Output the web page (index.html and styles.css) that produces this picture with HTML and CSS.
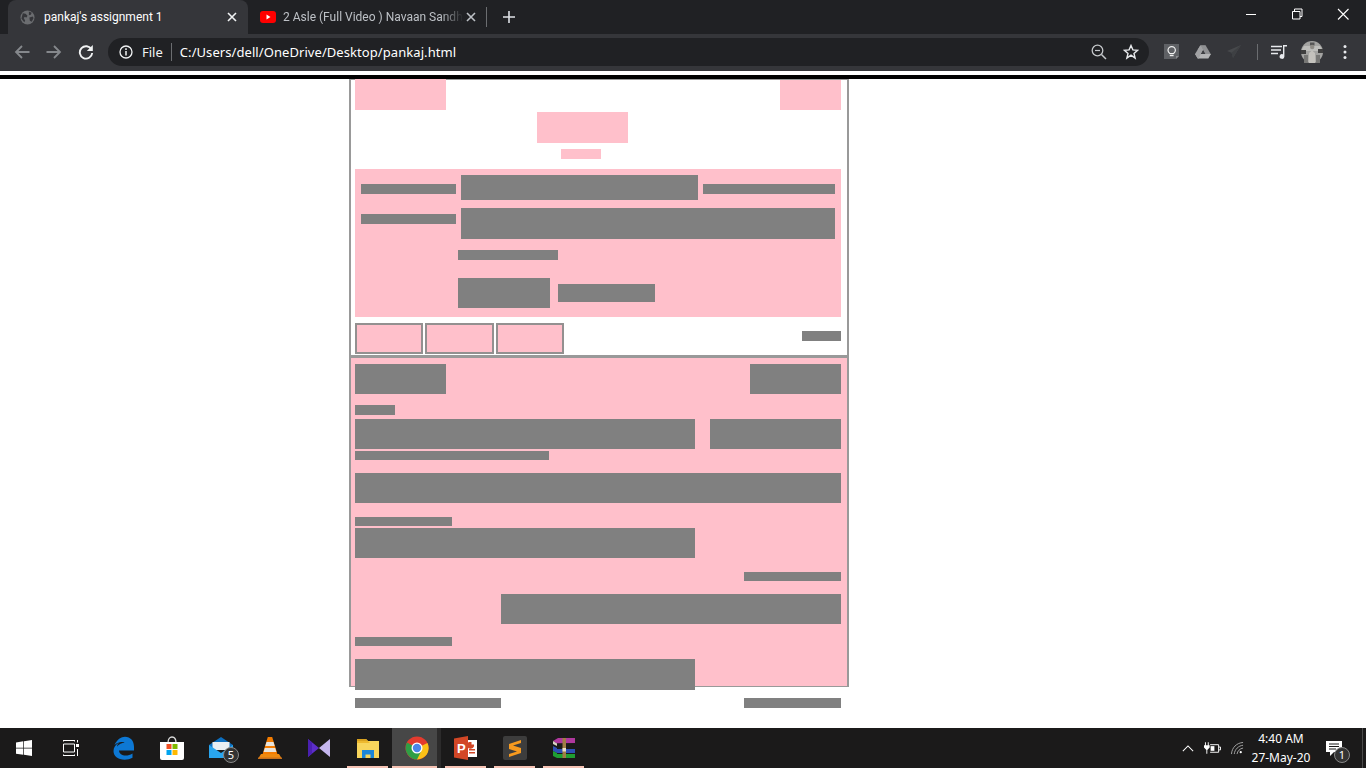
FILE: index.html
```html
<!DOCTYPE html>
<html lang="en">
<head>
    <meta charset="UTF-8">
    <meta name="viewport" content="width=device-width, initial-scale=1.0">
    <title>pankaj's assignment 1</title>
    <link rel="stylesheet" href="styles.css">
</head>
<body>
    <div class="window">
        <!-- tabs -->
        <div class="tabstrip">
            <div class="tab active">
                <svg class="favicon globe" viewBox="0 0 16 16"><circle cx="8" cy="8" r="7.500" fill="#6b6d70"/><path d="M3 3.500l3 .5 2 2-1 2-2-.5-1 1 1.500 3-1 1.500-3-4zM9.500 1.500l3 1.500-1 2-2 .500zM10 8l3.500-1 1 1.500-2 4-2-1z" fill="#35363a"/></svg>
                <span class="tab-title">pankaj's assignment 1</span>
                <svg class="tab-close" viewBox="0 0 10 10"><path d="M1 1l8 8M9 1l-8 8" stroke="#f1f3f4" stroke-width="1.600"/></svg>
            </div>
            <div class="tab">
                <svg class="favicon" viewBox="0 0 16 16"><rect y="2" width="16" height="12" rx="3" fill="#f00"/><path d="M6.500 5.500l4 2.500-4 2.500z" fill="#fff"/></svg>
                <span class="tab-title faded">2 Asle (Full Video ) Navaan Sandh</span>
                <svg class="tab-close" viewBox="0 0 10 10"><path d="M1 1l8 8M9 1l-8 8" stroke="#bdc1c6" stroke-width="1.600"/></svg>
            </div>
            <div class="tab-sep"></div>
            <svg class="new-tab" viewBox="0 0 12 12"><path d="M6 0v12M0 6h12" stroke="#dee1e6" stroke-width="1.600"/></svg>
            <div class="win-controls">
                <svg class="win-btn" viewBox="0 0 46 12"><path d="M18 6.500h10" stroke="#fff"/></svg>
                <svg class="win-btn" viewBox="0 0 46 12"><path d="M18.500 3.500h7.500v7.500h-7.500zM20.500 3.500v-2.500h7.500v7.500h-2" fill="none" stroke="#fff"/></svg>
                <svg class="win-btn" viewBox="0 0 46 12"><path d="M18 1l10.500 10.500M28.500 1l-10.500 10.500" stroke="#fff" stroke-width="1.100"/></svg>
            </div>
        </div>

        <!-- address bar -->
        <div class="toolbar">
            <svg class="nav-icon" viewBox="0 0 16 16"><path d="M15.500 8H2M8 2L2 8l6 6" fill="none" stroke="#85888c" stroke-width="1.800"/></svg>
            <svg class="nav-icon" viewBox="0 0 16 16"><path d="M.5 8H14M8 2l6 6-6 6" fill="none" stroke="#85888c" stroke-width="1.800"/></svg>
            <svg class="nav-icon" viewBox="0 0 16 16"><path d="M13.500 5.500A6.200 6.200 0 1 0 14.200 9" fill="none" stroke="#f1f3f4" stroke-width="1.900"/><path d="M14.800 1v6h-6z" fill="#f1f3f4"/></svg>
            <div class="omnibox">
                <svg class="info-icon" viewBox="0 0 14 14"><circle cx="7" cy="7" r="6" fill="none" stroke="#f1f3f4" stroke-width="1.300"/><path d="M7 6v4.500M7 3.300v1.600" stroke="#f1f3f4" stroke-width="1.500"/></svg>
                <span class="scheme">File</span>
                <span class="url">C:/Users/dell/OneDrive/Desktop/pankaj.html</span>
                <svg class="box-icon zoom-icon" viewBox="0 0 16 16"><circle cx="6.500" cy="6.500" r="5.300" fill="none" stroke="#c4c7ca" stroke-width="1.300"/><path d="M10.500 10.500l4.500 4.500" stroke="#c4c7ca" stroke-width="1.500"/><path d="M4 6.500h5" stroke="#c4c7ca" stroke-width="1.200"/></svg>
                <svg class="box-icon star-icon" viewBox="0 0 16 16"><path d="M8 1.500l1.900 4.400 4.700.4-3.600 3.100 1.100 4.700L8 11.200l-4.100 2.900 1.100-4.700L1.400 6.300l4.700-.4z" fill="none" stroke="#e8eaed" stroke-width="1.400"/></svg>
            </div>
            <svg class="ext ext-keep" viewBox="0 0 16 16"><path d="M0 0h15v12l-3 3H0z" fill="#5f6165"/><path d="M12 15v-3h3z" fill="#8a8b8e"/><path d="M5.800 9.500C4.500 8.600 4 7.500 4 6.300a3.700 3.700 0 0 1 7.400 0c0 1.200-.5 2.300-1.800 3.200z" fill="none" stroke="#f1f1f1" stroke-width="1.200"/><path d="M5.800 10.700h3.800v1.500H5.800z" fill="#f1f1f1"/></svg>
            <svg class="ext ext-drive" viewBox="0 0 16 16"><path d="M5.300 1.500h5.400L5.300 10.800 2.600 6z" fill="#a9aaac"/><path d="M10.700 1.500L16 10.500h-5.400L5.300 1.500z" fill="#8f9092"/><path d="M5.300 10.500H16l-2.700 4.500H2.700L0 10.500z" fill="#b4b5b6" transform="translate(0 -.5)"/><path d="M0 10l5.300-8.500L8 6l-4.700 9z" fill="#a0a1a3"/><path d="M8 6.300l2 3.700H6z" fill="#3f4043"/></svg>
            <svg class="ext ext-send" viewBox="0 0 16 16"><path d="M15 1L1 7l4.500 1.800L7 14z" fill="#47494c"/><path d="M15 1L5.500 8.800 7 14l1.500-3z" fill="#3e4043"/></svg>
            <div class="toolbar-sep"></div>
            <svg class="ext ext-music" viewBox="0 0 16 16"><path d="M0 2.500h11M0 6h10M0 9.500h7" stroke="#e8eaed" stroke-width="1.300"/><path d="M12 1h4v1.500h-2.600V12.500a2.400 2.400 0 1 1-1.400-2.200z" fill="#e8eaed"/></svg>
            <svg class="avatar" viewBox="0 0 22 22">
                <circle cx="11" cy="11" r="11" fill="#a3a3a1"/>
                <path d="M3 5h16l3 5H0z" fill="#bdbdba"/>
                <path d="M0 9h5v4H0zM17 8h5v4h-5z" fill="#3f3f3f"/>
                <path d="M3 14h4v8H3zM15 14h4v8h-4z" fill="#777775"/>
                <path d="M9 1.500h4.500v3H9z" fill="#555"/>
                <circle cx="11.200" cy="6" r="2.200" fill="#8f8c86"/>
                <path d="M7.500 22l.5-10 3-2.500 3 2.500.5 10z" fill="#c4c2bd"/>
            </svg>
            <svg class="ext ext-menu" viewBox="0 0 4 16"><circle cx="2" cy="2.500" r="1.500" fill="#e8eaed"/><circle cx="2" cy="8" r="1.500" fill="#e8eaed"/><circle cx="2" cy="13.500" r="1.500" fill="#e8eaed"/></svg>
        </div>

        <!-- page -->
        <div class="page">
            <div class="black-bar"></div>
            <div class="sheet">
                <div class="section-top">
                    <div class="row logo-row">
                        <div class="pink w91 h31"></div>
                        <div class="pink w61 h30 push-right drop1"></div>
                    </div>
                    <div class="pink w91 h31 brand"></div>
                    <div class="pink w40 h10 tagline"></div>
                    <div class="pink search-panel">
                        <div class="row first">
                            <div class="grey w95 h10 label-a"></div>
                            <div class="grey w237 h25 gap5"></div>
                            <div class="grey w132 h10 label-a gap5"></div>
                        </div>
                        <div class="row second">
                            <div class="grey w95 h10 label-b"></div>
                            <div class="grey w374 h31 gap5"></div>
                        </div>
                        <div class="grey w100 h10 hint"></div>
                        <div class="row actions">
                            <div class="grey w92 h30"></div>
                            <div class="grey w97 h18 secondary"></div>
                        </div>
                    </div>
                    <div class="row tabs-row">
                        <div class="pink bordered w68 h31"></div>
                        <div class="pink bordered w69 h31"></div>
                        <div class="pink bordered w68 h31"></div>
                        <div class="grey w39 h10 more"></div>
                    </div>
                </div>

                <div class="section-bottom">
                    <div class="row">
                        <div class="grey w91 h30"></div>
                        <div class="grey w91 h30 push-right"></div>
                    </div>
                    <div class="grey w40 h10 m11"></div>
                    <div class="row m4">
                        <div class="grey w340 h30"></div>
                        <div class="grey w131 h30 push-right"></div>
                    </div>
                    <div class="grey w194 h9 m2"></div>
                    <div class="grey wfull h30 m13"></div>
                    <div class="grey w97 h9 m14"></div>
                    <div class="grey w340 h30 m2"></div>
                    <div class="grey w97 h9 m14 push-end"></div>
                    <div class="grey w340 h30 m13 push-end"></div>
                    <div class="grey w97 h9 m13"></div>
                    <div class="grey w340 h31 m13"></div>
                </div>

                <div class="row sheet-footer">
                    <div class="grey w146 h10"></div>
                    <div class="grey w97 h10 push-right"></div>
                </div>
            </div>
        </div>

        <!-- windows taskbar -->
        <div class="taskbar">
            <div class="task start">
                <svg viewBox="0 0 16 16"><path d="M0 2.400l7.300-1.100v6.400H0zM8 1.200L16 0v7.700H8zM0 8.400h7.300v6.400L0 13.700zM8 8.400h8V16l-8-1.200z" fill="#fff"/></svg>
            </div>
            <div class="task view">
                <svg viewBox="0 0 16 16"><path d="M.5 4h11v8h-11zM.5 .5h11M.5 15.500h11M.5 0v1.500M11.500 0v1.500M.5 14.500V16M11.500 14.500V16" fill="none" stroke="#fff"/><path d="M14.500 0v2.500M14.500 9v7" stroke="#fff"/><rect x="13" y="4" width="3" height="3" fill="#fff"/></svg>
            </div>
            <div class="task first-app">
                <svg viewBox="0 0 24 24"><path d="M23 14.500H8c.3 3.300 3 5 6.500 5 2.500 0 4.800-.6 7-2v4.300c-2.200 1.300-5 1.900-7.800 1.900C6.800 23.700 2.500 20 2.500 15c0-3.600 2-6.400 5.500-8.300-1.200 1.200-1.800 2.500-2 3.700 1.800-2.200 4.800-3.700 7.800-3.700 3 0 5 1.600 5 3.800H8.500C10 8.500 13 7.200 14 7.200 12 5.500 8 5.500 3.500 9 6 3.500 10 .7 14 .7c5.500 0 9 4.300 9 10z" fill="#0d78d4"/></svg>
            </div>
            <div class="task">
                <svg viewBox="0 0 24 24"><path d="M8 7c0-8 8-8 8 0" fill="none" stroke="#ddd" stroke-width="1.300"/><path d="M0 6h24v16a2 2 0 0 1-2 2H2a2 2 0 0 1-2-2z" fill="#fff"/><rect x="6.500" y="8" width="5" height="5" fill="#f25022"/><rect x="12.500" y="8" width="5" height="5" fill="#7fba00"/><rect x="6.500" y="14" width="5" height="5" fill="#00a4ef"/><rect x="12.500" y="14" width="5" height="5" fill="#ffb900"/></svg>
            </div>
            <div class="task">
                <svg viewBox="0 0 24 24"><path d="M0 9L12 1l12 8v4H0z" fill="#0c6fc0"/><path d="M3.500 6h17v8h-17z" fill="#e8eef3"/><path d="M0 9l12 8 12-8v13H0z" fill="#29a5ee"/></svg>
                <span class="count">5</span>
            </div>
            <div class="task">
                <svg viewBox="0 0 24 24"><path d="M9.800 1h4.400l5.800 19H4z" fill="#f57c00"/><path d="M8.500 6h7l1.200 4H7.300zM6.800 12h10.400l1.200 4H5.600z" fill="#e8e4dc"/><path d="M3 18h18l3 5H0z" fill="#ef8a10"/><path d="M0 21.500h24V23H0z" fill="#c9701a"/></svg>
            </div>
            <div class="task">
                <svg viewBox="0 0 24 24"><path d="M1 3l11 9-11 9z" fill="#5c2dc9"/><path d="M1 3l4 3.500v11L1 21z" fill="#4a20b0"/><path d="M23 3l-11 9 11 9z" fill="#c5b6ee"/></svg>
            </div>
            <div class="task lit">
                <svg viewBox="0 0 24 24"><path d="M1 3h9l2 2h11v17H1z" fill="#f8d55c"/><path d="M1 3h9l2 2H1z" fill="#d9a21f"/><path d="M1 5h11l2 2H1z" fill="#eeb92f"/><path d="M6 22v-8h12v8h-3.500v-3.500h-5V22z" fill="#1d86d8"/></svg>
            </div>
            <div class="task running">
                <svg viewBox="0 0 24 24"><circle cx="12" cy="12" r="11.500" fill="#e33b2e"/><path d="M12 12L22.500 7A11.500 11.500 0 0 1 12 23.500z" fill="#fbc117"/><path d="M12 12L2 6.500A11.500 11.500 0 0 0 12 23.500l4-8z" fill="#2f9e45"/><circle cx="12" cy="12" r="5.500" fill="#fff"/><circle cx="12" cy="12" r="4.200" fill="#4b86e8"/></svg>
            </div>
            <div class="task lit">
                <svg viewBox="0 0 24 24"><rect x="8" y="4" width="15" height="17" fill="#fff"/><path d="M15 6h2.500v2.500H20A3.500 3.500 0 1 1 15 6z" fill="#d24726"/><path d="M15 13h6v1.500h-6zM15 16h6v1.500h-6z" fill="#d24726"/><path d="M0 2.500L14 0v24L0 21.500z" fill="#d24726"/><text x="3" y="16.500" class="ppt-letter">P</text></svg>
            </div>
            <div class="task lit">
                <svg viewBox="0 0 24 24"><rect width="24" height="24" rx="2" fill="#3d3d3d"/><path d="M18 4L6 8v5l8 2.500L6 18v3l12-4v-5l-8-2.500L18 7z" fill="#f79a1f"/></svg>
            </div>
            <div class="task lit">
                <svg viewBox="0 0 24 24"><path d="M1 5l5-3h17v5L5 7.500z" fill="#b0389e"/><path d="M1 5l4 2.500v2.500L1 8z" fill="#d9d4c4"/><path d="M1 10l4 2h18v5H5l-4-2z" fill="#2d4fb5"/><path d="M1 15l4 2h18v5H5l-4-2z" fill="#1f9e32"/><path d="M5 7.500h18v1.500H5zM5 12h18v1H5zM5 17h18v1H5z" fill="#1a1a1a"/><path d="M10.500 2h3.500v20h-3.500z" fill="#a07d45"/><rect x="10.500" y="12" width="3.500" height="3.500" fill="#e8e0c8"/></svg>
            </div>
            <div class="tray">
                <svg class="chevron" viewBox="0 0 14 8"><path d="M1 7l6-6 6 6" fill="none" stroke="#fff" stroke-width="1.200"/></svg>
                <svg class="battery" viewBox="0 0 18 12"><path d="M6.500 2.500h9v8h-9M15.500 5h2v3h-2" fill="none" stroke="#fff"/><path d="M1 0h1v3H1zM4 0h1v3H4zM0 3h6v2.500L3.500 8v4h-1V8L0 5.500z" fill="#fff"/><rect x="7" y="4" width="4" height="5" fill="#fff"/></svg>
                <svg class="wifi" viewBox="0 0 14 14"><path d="M.5 13C1 6 6 1 13 .5M3.500 13c.5-5 4.500-9 9.500-9.500M6.500 13c.3-3 3-6 6.500-6.500" fill="none" stroke="#aaa"/><circle cx="10.500" cy="11" r="1.200" fill="#fff"/></svg>
                <div class="clock"><span>4:40 AM</span><span>27-May-20</span></div>
                <div class="notify">
                    <svg viewBox="0 0 16 15"><path d="M0 0h16v11H8l-4 4v-4H0z" fill="#fff"/><path d="M3 3h10M3 5.500h10M3 8h7" stroke="#1b1a1a"/></svg>
                    <span class="count small">1</span>
                </div>
                <div class="show-desktop"></div>
            </div>
        </div>
    </div>
</body>
</html>
```

FILE: styles.css
```css
html, body {
    margin: 0;
    padding: 0;
    background: #fff;
}

.window {
    width: 1366px;
    height: 768px;
    display: flex;
    flex-direction: column;
    overflow: hidden;
    font-family: 'Noto Sans', 'Open Sans', sans-serif;
}

svg {
    display: block;
    flex: none;
}

/* tab strip */
.tabstrip {
    height: 34px;
    flex: none;
    display: flex;
    background: #202124;
    color: #f1f3f4;
    font-family: Roboto, 'Noto Sans', sans-serif;
    font-size: 12px;
}

.tab {
    box-sizing: border-box;
    width: 240px;
    margin-left: 8px;
    padding: 0 11px 0 12px;
    display: flex;
    align-items: center;
    color: #bdc1c6;
}

.tab + .tab {
    margin-left: 0;
    width: 239px;
}

.tab.active {
    background: #35363a;
    color: #fff;
    border-radius: 8px 8px 0 0;
}

.favicon {
    width: 16px;
    height: 16px;
    margin-right: 7px;
}

.favicon.globe {
    width: 15px;
    height: 15px;
    margin-right: 9px;
}

.tab-title {
    flex: 1;
    white-space: nowrap;
}

.tab-title.faded {
    flex: none;
    width: 180px;
    -webkit-mask-image: linear-gradient(to right, #000 88%, transparent 100%);
    mask-image: linear-gradient(to right, #000 88%, transparent 100%);
}

.tab-close {
    width: 10px;
    height: 10px;
    margin-left: 8px;
}

.faded + .tab-close {
    margin-left: 3px;
}

.tab-sep {
    width: 1px;
    height: 20px;
    margin: 7px 0 0 -1px;
    background: #6b6d70;
}

.new-tab {
    width: 12px;
    height: 12px;
    margin: 11px 0 0 16px;
}

.win-controls {
    margin-left: auto;
    display: flex;
}

.win-btn {
    width: 46px;
    height: 12px;
    margin-top: 8px;
}

/* address bar */
.toolbar {
    height: 37px;
    flex: none;
    box-sizing: border-box;
    padding: 4px 0 5px 14px;
    display: flex;
    align-items: center;
    background: #35363a;
}

.nav-icon {
    width: 16px;
    height: 16px;
    margin-right: 16px;
}

.omnibox {
    width: 1041px;
    height: 28px;
    margin-left: -2px;
    box-sizing: border-box;
    padding-left: 11px;
    display: flex;
    align-items: center;
    background: #202124;
    border-radius: 14px;
    color: #f1f3f4;
    font-size: 13px;
}

.info-icon {
    width: 14px;
    height: 14px;
}

.scheme {
    margin-left: 9px;
    padding-right: 8px;
    border-right: 1px solid #6b6d70;
    line-height: 18px;
}

.url {
    margin-left: 8px;
    color: #fff;
    letter-spacing: 0.07px;
}

.box-icon {
    width: 16px;
    height: 16px;
}

.zoom-icon {
    margin-left: auto;
}

.star-icon {
    margin: 0 10px 0 16px;
}

.ext {
    width: 16px;
    height: 16px;
}

.ext-keep {
    margin-left: 15px;
}

.ext-drive,
.ext-send {
    margin-left: 15px;
}

.toolbar-sep {
    width: 1px;
    height: 16px;
    margin-left: 15px;
    background: #6b6d70;
}

.ext-music {
    margin-left: 13px;
}

.avatar {
    width: 22px;
    height: 22px;
    margin-left: 14px;
}

.ext-menu {
    width: 4px;
    margin-left: 20px;
}

/* page */
.page {
    flex: 1;
    min-height: 0;
    background: #fff;
}

.black-bar {
    height: 4px;
    margin-top: 4px;
    background: #000;
}

.sheet {
    width: 500px;
    margin-left: 349px;
}

.row {
    display: flex;
    align-items: flex-start;
}

.push-right {
    margin-left: auto;
}

.push-end {
    align-self: flex-end;
}

.drop1 {
    margin-top: 1px;
}

.pink {
    background: #ffc0cb;
}

.grey {
    background: #808080;
}

.bordered {
    box-sizing: border-box;
    border: 2px solid #939090;
}

.section-top {
    box-sizing: border-box;
    height: 277px;
    padding: 0 6px 0 4px;
    border: 2px solid #999;
    border-width: 1px 2px;
}

.logo-row {
    margin-top: -1px;
}

.brand {
    margin: 2px 0 0 182px;
}

.tagline {
    margin: 6px 0 0 206px;
}

.search-panel {
    height: 148px;
    margin-top: 10px;
    padding: 6px 6px 0;
    box-sizing: border-box;
}

.label-a {
    margin-top: 9px;
}

.label-b {
    margin-top: 6px;
}

.second {
    margin-top: 8px;
}

.hint {
    margin: 11px 0 0 97px;
}

.actions {
    margin: 18px 0 0 97px;
}

.secondary {
    margin: 6px 0 0 8px;
}

.gap5 {
    margin-left: 5px;
}

.tabs-row {
    margin-top: 6px;
    gap: 2px;
}

.more {
    margin: 8px 0 0 auto;
}

.section-bottom {
    box-sizing: border-box;
    height: 331px;
    padding: 6px 6px 0 4px;
    display: flex;
    flex-direction: column;
    background: #ffc0cb;
    border: 2px solid #999;
    border-bottom-width: 1px;
}

.section-bottom > .row {
    flex: none;
}

.m2 { margin-top: 2px; }
.m4 { margin-top: 4px; }
.m11 { margin-top: 11px; }
.m13 { margin-top: 13px; }
.m14 { margin-top: 14px; }

.sheet-footer {
    margin-top: 11px;
    padding: 0 8px 0 6px;
}

/* block sizes */
.w39 { width: 39px; flex: none; }
.w40 { width: 40px; flex: none; }
.w61 { width: 61px; flex: none; }
.w68 { width: 68px; flex: none; }
.w69 { width: 69px; flex: none; }
.w91 { width: 91px; flex: none; }
.w92 { width: 92px; flex: none; }
.w95 { width: 95px; flex: none; }
.w97 { width: 97px; flex: none; }
.w100 { width: 100px; flex: none; }
.w131 { width: 131px; flex: none; }
.w132 { width: 132px; flex: none; }
.w146 { width: 146px; flex: none; }
.w194 { width: 194px; flex: none; }
.w237 { width: 237px; flex: none; }
.w340 { width: 340px; flex: none; }
.w374 { width: 374px; flex: none; }
.wfull { width: 486px; flex: none; }

.h9 { height: 9px; flex: none; }
.h10 { height: 10px; flex: none; }
.h18 { height: 18px; flex: none; }
.h25 { height: 25px; flex: none; }
.h30 { height: 30px; flex: none; }
.h31 { height: 31px; flex: none; }

/* taskbar */
.taskbar {
    height: 40px;
    flex: none;
    display: flex;
    align-items: stretch;
    background: #1b1a1a;
    color: #fff;
}

.task {
    position: relative;
    width: 49px;
    flex: none;
    display: flex;
    align-items: center;
    justify-content: center;
}

.task svg {
    width: 24px;
    height: 24px;
}

.task.start {
    width: 48px;
}

.task.start svg,
.task.view svg {
    width: 16px;
    height: 16px;
}

.task.view {
    width: 46px;
}

.task.first-app {
    margin-left: 4px;
}

.task.lit::after,
.task.running::after {
    content: "";
    position: absolute;
    left: 4px;
    right: 4px;
    bottom: 0;
    height: 2px;
    background: #f6c3b4;
}

.task.running {
    background: linear-gradient(to right, #474747 45px, #2c2b2b 45px);
}

.task.running::after {
    left: 0;
    right: 4px;
}

.ppt-letter {
    fill: #fff;
    font-family: 'Liberation Sans', sans-serif;
    font-size: 13px;
    font-weight: 700;
}

.count {
    position: absolute;
    right: 6px;
    bottom: 5px;
    width: 14px;
    height: 14px;
    border: 1px solid #888;
    border-radius: 50%;
    background: #333;
    font-size: 11px;
    line-height: 14px;
    text-align: center;
}

.tray {
    margin-left: auto;
    display: flex;
    align-items: center;
    font-size: 12px;
}

.chevron {
    width: 12px;
    height: 7px;
}

.battery {
    width: 17px;
    height: 12px;
    margin-left: 10px;
}

.wifi {
    width: 13px;
    height: 13px;
    margin-left: 10px;
}

.clock {
    width: 70px;
    margin-left: 2px;
    display: flex;
    flex-direction: column;
    align-items: center;
    line-height: 19px;
}

.notify {
    position: relative;
    width: 46px;
    padding-left: 10px;
    box-sizing: border-box;
}

.notify svg {
    width: 16px;
    height: 15px;
}

.count.small {
    left: 18px;
    right: auto;
    bottom: -7px;
}

.show-desktop {
    width: 4px;
    height: 40px;
    box-sizing: border-box;
    border-left: 1px solid #4a4a4a;
}
```
